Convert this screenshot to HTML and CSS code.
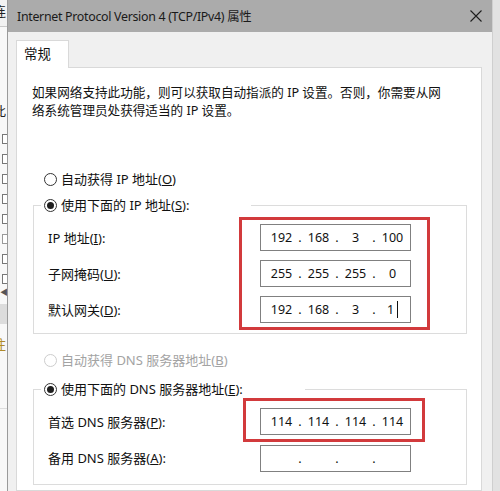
FILE: index.html
```html
<!DOCTYPE html>
<html lang="zh-CN">
<head>
<meta charset="utf-8">
<title>Internet Protocol Version 4 (TCP/IPv4) 属性</title>
<link rel="stylesheet" href="styles.css">
</head>
<body>
<div class="screen">
  <div class="bgwin">
    <div class="bg-top"><span class="bg-char">连</span></div>
    <div class="bg-line"></div>
    <div class="bg-gap1"></div>
    <div class="bg-char2"><span class="bg-char">此</span></div>
    <div class="bg-icons">
      <i></i><i></i><i></i><i></i><i></i><i class="empty"></i><i></i><i></i>
    </div>
    <div class="bg-arrow">◀</div>
    <div class="bg-band"></div>
    <div class="bg-char3"><span class="bg-char">注</span></div>
    <div class="bg-rest"></div>
  </div>

  <div class="dialog">
    <div class="titlebar">
      <span class="title">Internet Protocol Version 4 (TCP/IPv4) 属性</span>
      <svg class="close" width="12" height="12" viewBox="0 0 12 12" aria-hidden="true">
        <path d="M0.5 0.5 L11.5 11.5 M11.5 0.5 L0.5 11.5" stroke="#1e1e1e" stroke-width="1.1" fill="none"/>
      </svg>
    </div>
    <div class="body">
      <div class="tabs"><div class="tab">常规</div></div>
      <div class="panel">
        <p class="intro">如果网络支持此功能，则可以获取自动指派的 IP 设置。否则，你需要从网<br>络系统管理员处获得适当的 IP 设置。</p>

        <div class="opt opt-first"><span class="rad"></span><span class="opt-text">自动获得 IP 地址(<u>O</u>)</span></div>

        <div class="group group-ip">
          <div class="ghead"><span class="rad on"></span><span class="opt-text">使用下面的 IP 地址(<u>S</u>):</span></div>
          <div class="gbody gbody-ip">
            <div class="labels labels-ip">
              <div class="lbl">IP 地址(<u>I</u>):</div>
              <div class="lbl">子网掩码(<u>U</u>):</div>
              <div class="lbl">默认网关(<u>D</u>):</div>
            </div>
            <div class="redbox redbox-ip">
              <div class="ip"><span class="seg">192</span><span class="dot">.</span><span class="seg">168</span><span class="dot">.</span><span class="seg">3</span><span class="dot">.</span><span class="seg">100</span></div>
              <div class="ip"><span class="seg">255</span><span class="dot">.</span><span class="seg">255</span><span class="dot">.</span><span class="seg">255</span><span class="dot">.</span><span class="seg">0</span></div>
              <div class="ip"><span class="seg">192</span><span class="dot">.</span><span class="seg">168</span><span class="dot">.</span><span class="seg">3</span><span class="dot">.</span><span class="seg">1<span class="caret"></span></span></div>
            </div>
          </div>
        </div>

        <div class="opt opt-dns disabled"><span class="rad"></span><span class="opt-text">自动获得 DNS 服务器地址(<u>B</u>)</span></div>

        <div class="group group-dns">
          <div class="ghead"><span class="rad on"></span><span class="opt-text">使用下面的 DNS 服务器地址(<u>E</u>):</span></div>
          <div class="gbody gbody-dns">
            <div class="labels labels-dns">
              <div class="lbl">首选 DNS 服务器(<u>P</u>):</div>
              <div class="lbl">备用 DNS 服务器(<u>A</u>):</div>
            </div>
            <div class="dnscol">
              <div class="redbox redbox-dns">
                <div class="ip"><span class="seg">114</span><span class="dot">.</span><span class="seg">114</span><span class="dot">.</span><span class="seg">114</span><span class="dot">.</span><span class="seg">114</span></div>
              </div>
              <div class="ip ip-alt"><span class="seg"></span><span class="dot">.</span><span class="seg"></span><span class="dot">.</span><span class="seg"></span><span class="dot">.</span><span class="seg"></span></div>
            </div>
          </div>
        </div>
      </div>
    </div>
  </div>

  <div class="rstrip"></div>
</div>
</body>
</html>
```

FILE: styles.css
```css
* { box-sizing: border-box; }
html, body { margin: 0; padding: 0; }
body {
  width: 500px;
  height: 491px;
  overflow: hidden;
  background: #e4e4e4;
  font-family: "Noto Sans", "Noto Sans CJK SC", sans-serif;
  color: #111;
}
.screen { display: flex; height: 491px; }

/* background window peeking at the left */
.bgwin {
  width: 7px;
  flex: none;
  background: #f8f8f8;
  overflow: hidden;
  display: flex;
  flex-direction: column;
}
.bg-char { display: block; margin-left: -7px; font-size: 13px; line-height: 16px; color: #222; }
.bg-top { height: 26px; padding-top: 3px; background: #f2f2f2; }
.bg-line { height: 1px; background: #c9c9c9; }
.bg-gap1 { height: 76px; }
.bg-char2 { height: 26px; }
.bg-icons { display: flex; flex-direction: column; gap: 10px; padding-top: 5px; }
.bg-icons i { display: block; width: 6px; height: 10px; margin-left: 2px; border: 1px solid #777; border-right: none; background: #fff; }
.bg-icons i.empty { border-color: #999; }
.bg-arrow { font-size: 8px; line-height: 12px; color: #555; margin-top: 2px; }
.bg-band { height: 20px; margin-top: 6px; background: #dcdcdc; }
.bg-char3 { height: 40px; padding-top: 12px; }
.bg-char3 .bg-char { color: #b08a2a; }
.bg-rest { flex: 1; border-top: 1px solid #ddd; margin-top: 44px; }

/* dialog */
.dialog {
  width: 485px;
  flex: none;
  display: flex;
  flex-direction: column;
  border-left: 1px solid #9a9a9a;
}
.rstrip { flex: 1; background: #e2e2e2; border-left: 1px solid #cfcfcf; }

.titlebar {
  height: 32px;
  flex: none;
  background: #ababab;
  display: flex;
  align-items: center;
  justify-content: space-between;
  padding: 0 10px 0 9px;
}
.title { font-size: 12.4px; letter-spacing: -0.3px; color: #1a1a1a; }
.close { display: block; }

.body {
  flex: 1;
  background: #f0f0f0;
  padding: 8px 10px 0 8px;
  display: flex;
  flex-direction: column;
}
.tabs { display: flex; height: 27px; }
.tab {
  width: 53px;
  height: 28px;
  background: #fff;
  border: 1px solid #d9d9d9;
  border-bottom: none;
  font-size: 13.4px;
  line-height: 26px;
  padding-left: 7px;
  position: relative;
  z-index: 1;
}
.panel {
  flex: 1;
  background: #fff;
  border: 1px solid #d9d9d9;
  padding: 16px 0 0 15px;
}
.intro { margin: 0; font-size: 12.6px; line-height: 18px; white-space: nowrap; }

.opt {
  display: flex;
  align-items: center;
  height: 18px;
  margin-left: 12px;
  font-size: 13px;
}
.opt-first { margin-top: 50px; }
.opt-dns { margin-top: 17px; }
.opt-text { margin-left: 4px; line-height: 18px; white-space: nowrap; }
.disabled { color: #a3a3a3; }
.disabled .rad { border-color: #cdcdcd; }

.rad {
  width: 13px;
  height: 13px;
  flex: none;
  border: 1px solid #333;
  border-radius: 50%;
  background: #fff;
  display: flex;
  align-items: center;
  justify-content: center;
}
.rad.on::after {
  content: "";
  width: 7px;
  height: 7px;
  border-radius: 50%;
  background: #1e1e1e;
}

.group {
  border: 1px solid #dcdcdc;
  margin: 17px 14px 0 1px;
  display: flex;
  flex-direction: column;
}
.group-dns { margin-top: 20px; padding-bottom: 12px; }
.group-ip { padding-bottom: 3px; }
.ghead {
  display: flex;
  align-items: center;
  width: max-content;
  height: 18px;
  margin: -10px 0 0 7px;
  padding: 0 62px 0 3px;
  background: #fff;
  font-size: 13px;
}
.gbody { display: flex; padding-left: 14px; }
.gbody-ip { margin-top: 3px; }

.labels { display: flex; flex-direction: column; gap: 9px; }
.labels-ip { width: 191px; padding-top: 7px; }
.labels-dns { width: 195px; padding-top: 10px; }
.lbl { height: 27px; display: flex; align-items: center; font-size: 13px; white-space: nowrap; }

.redbox {
  border: 3px solid #d23a3c;
  display: flex;
  flex-direction: column;
  gap: 9px;
}
.redbox-ip { padding: 4px 16px 4px 18px; }
.redbox-dns { padding: 7px 11px 4px 14px; }
.dnscol { display: flex; flex-direction: column; }
.ip-alt { margin: 3px 0 0 17px; }

.ip {
  width: 151px;
  height: 27px;
  border: 1px solid #808080;
  background: #fff;
  display: flex;
  align-items: center;
  padding-left: 6px;
  font-size: 12.5px;
  color: #111;
}
.seg { width: 29px; text-align: center; display: inline-flex; justify-content: center; align-items: center; }
.dot { width: 8px; text-align: center; }
.caret { display: inline-block; width: 1px; height: 17px; background: #111; margin-left: 3px; }
```
